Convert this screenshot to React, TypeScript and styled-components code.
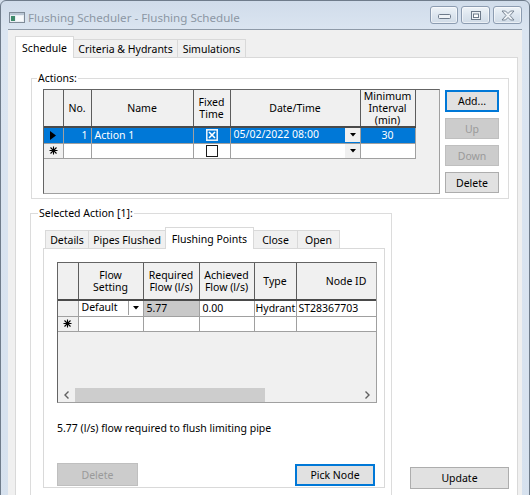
import React from "react";
import styled, { createGlobalStyle } from "styled-components";

const GlobalStyle = createGlobalStyle`
  html, body {
    margin: 0;
    padding: 0;
    overflow: hidden;
    background: #d3deeb;
  }
  body {
    font-family: "Noto Sans", "Liberation Sans", sans-serif;
    font-size: 10.5px;
    color: #000;
  }
  * {
    box-sizing: border-box;
  }
`;

const Window = styled.div`
  width: 530px;
  height: 540px;
  background: linear-gradient(#d0dcea, #dbe5f1 30px, #d6e1ee);
  border: 1px solid #6f7c8b;
  border-radius: 6px 6px 0 0;
  display: flex;
  flex-direction: column;
`;

const TitleBar = styled.div`
  height: 28px;
  display: flex;
  align-items: center;
  padding: 4px 7px 0 8px;
`;

const Caption = styled.div`
  flex: 1;
  margin-left: 3px;
  font-size: 11.6px;
  color: #8c97a4;
  white-space: nowrap;
`;

const WinButtons = styled.div`
  display: flex;
  gap: 3px;
  margin-top: -4px;
`;

const WinButton = styled.div<{ $w: number }>`
  width: ${(p) => p.$w}px;
  height: 18px;
  border: 1px solid #8c9cb1;
  border-radius: 3px;
  background: linear-gradient(#eef3f8, #dde6ef 50%, #d0dbe7);
  box-shadow: inset 0 0 0 1px rgba(255, 255, 255, 0.55);
  display: flex;
  align-items: center;
  justify-content: center;
`;

const Client = styled.div`
  flex: 1;
  margin: 0 7px;
  background: #f0f0f0;
  border-top: 1px solid #8e9aa8;
  padding: 6px 4px 0 7px;
  display: flex;
  flex-direction: column;
`;

const TabStrip = styled.div<{ $pad?: number }>`
  display: flex;
  align-items: flex-end;
  height: 21px;
  padding-left: ${(p) => p.$pad || 0}px;
  position: relative;
  z-index: 1;
`;

const Tab = styled.div<{ $active?: boolean; $w: number }>`
  width: ${(p) => p.$w}px;
  height: ${(p) => (p.$active ? 22 : 18)}px;
  margin-bottom: ${(p) => (p.$active ? -1 : 0)}px;
  margin-right: -1px;
  border: 1px solid #d9d9d9;
  border-bottom: none;
  background: ${(p) => (p.$active ? "#fff" : "#f0f0f0")};
  position: relative;
  z-index: ${(p) => (p.$active ? 2 : 0)};
  display: flex;
  align-items: center;
  justify-content: center;
  padding-top: ${(p) => (p.$active ? 0 : 1)}px;
  white-space: nowrap;
`;

const Panel = styled.div`
  height: 460px;
  background: #fff;
  border: 1px solid #d9d9d9;
  padding: 13px 8px 0 14px;
  display: flex;
  flex-direction: column;
`;

const Group = styled.fieldset<{ $pad: string }>`
  margin: 0;
  min-width: 0;
  border: 1px solid #dcdcdc;
  padding: ${(p) => p.$pad};
`;

const Legend = styled.legend<{ $shift: number }>`
  padding: 0 1px;
  margin-left: ${(p) => p.$shift}px;
  line-height: 15px;
`;

const ActionsGroup = styled(Group)`
  margin-left: 1px;
`;

const GroupRow = styled.div`
  display: flex;
  gap: 5px;
`;

const GridFrame = styled.div<{ $w: number; $h: number }>`
  width: ${(p) => p.$w}px;
  height: ${(p) => p.$h}px;
  background: #f0f0f0;
  border: 1px solid #a0a0a0;
  border-top-color: #646464;
  border-left-color: #646464;
  overflow: hidden;
  display: flex;
  flex-direction: column;
`;

const Table = styled.table<{ $w: number }>`
  width: ${(p) => p.$w}px;
  border-collapse: collapse;
  table-layout: fixed;
  flex: none;
`;

const HeadCell = styled.th<{ $h: number; $shift?: number }>`
  height: ${(p) => p.$h}px;
  padding: 0 2px 0 ${(p) => 2 + (p.$shift || 0)}px;
  background: #f0f0f0;
  font-weight: normal;
  text-align: center;
  vertical-align: middle;
  line-height: 12px;
  border-right: 1px solid #5c5c5c;
  border-bottom: 2px solid #4a4a4a;
  white-space: nowrap;
`;

const Row = styled.tr<{ $selected?: boolean; $h: number }>`
  height: ${(p) => p.$h}px;
  background: ${(p) => (p.$selected ? "#0078d7" : "#fff")};
  color: ${(p) => (p.$selected ? "#fff" : "#000")};
`;

const Cell = styled.td<{ $align?: string; $bg?: string }>`
  padding: 0 3px;
  text-align: ${(p) => p.$align || "left"};
  background: ${(p) => p.$bg || "transparent"};
  border-right: 1px solid #a0a0a0;
  border-bottom: 1px solid #a0a0a0;
  white-space: nowrap;
  overflow: hidden;
  line-height: 13px;
`;

const RowHead = styled.td<{ $selected?: boolean }>`
  padding: 0;
  background: ${(p) => (p.$selected ? "#0078d7" : "#f0f0f0")};
  border-right: 1px solid #a0a0a0;
  border-bottom: 1px solid #a0a0a0;
  text-align: center;
  line-height: 0;
`;

const ComboCell = styled.div`
  display: flex;
  align-items: stretch;
  justify-content: space-between;
  height: 14px;
  margin-right: -3px;
`;

const DropButton = styled.span<{ $edge?: boolean }>`
  width: 15px;
  background: ${(p) => (p.$edge ? "#fff" : "#f0f0f0")};
  border-left: 1px solid ${(p) => (p.$edge ? "#a0a0a0" : "#f0f0f0")};
  display: flex;
  align-items: center;
  justify-content: center;
`;

const ButtonColumn = styled.div`
  display: flex;
  flex-direction: column;
  gap: 6px;
  margin-top: 1px;
`;

const Button = styled.button<{ $w: number; $h: number; $default?: boolean }>`
  width: ${(p) => p.$w}px;
  height: ${(p) => p.$h}px;
  padding: 0;
  font: inherit;
  color: #000;
  background: #e1e1e1;
  border: 1px solid ${(p) => (p.$default ? "#0078d7" : "#adadad")};
  box-shadow: ${(p) => (p.$default ? "inset 0 0 0 1px #0078d7" : "none")};
  &:disabled {
    background: #cccccc;
    border-color: #bfbfbf;
    color: #9a9a9a;
  }
`;

const LowerRow = styled.div`
  display: flex;
  align-items: flex-end;
  margin-top: 7px;
`;

const SelectedGroup = styled(Group)`
  width: 362px;
  flex: none;
`;

const UpdateButton = styled(Button)`
  margin: 0 0 10px 18px;
`;

const InnerPanel = styled.div`
  height: 240px;
  background: #fff;
  border: 1px solid #d9d9d9;
  padding: 13px 0 1px 13px;
  display: flex;
  flex-direction: column;
`;

const Filler = styled.div`
  flex: 1;
`;

const HScroll = styled.div`
  height: 15px;
  display: flex;
  background: #f0f0f0;
`;

const ScrollArrow = styled.div`
  width: 17px;
  display: flex;
  align-items: center;
  justify-content: center;
`;

const ScrollTrack = styled.div`
  flex: 1;
  display: flex;
  align-items: center;
`;

const ScrollThumb = styled.div<{ $w: number }>`
  width: ${(p) => p.$w}px;
  height: 14px;
  background: #cdcdcd;
`;

const Message = styled.div`
  margin-top: 18px;
  line-height: 14px;
`;

const ButtonRow = styled.div`
  margin-top: auto;
  width: 318px;
  display: flex;
  justify-content: space-between;
  align-items: center;
`;

const AppIcon = () => (
  <svg width="16" height="11" viewBox="0 0 16 11">
    <rect x="0.5" y="0.5" width="15" height="10" fill="#e9eef3" stroke="#7f8b98" />
    <rect x="1" y="1" width="14" height="2" fill="#b9c6d4" />
    <rect x="2" y="4" width="4" height="5" fill="#3f8a6c" />
    <rect x="7" y="4" width="7" height="5" fill="#f7f9fb" />
  </svg>
);

const Pointer = () => (
  <svg width="6" height="9" viewBox="0 0 6 9">
    <path d="M0 0 L6 4.5 L0 9 Z" fill="#000" />
  </svg>
);

const NewRow = () => (
  <svg width="9" height="9" viewBox="0 0 9 9">
    <path d="M4.5 0.5 V8.5 M0.5 4.5 H8.5 M1.5 1.5 L7.5 7.5 M7.5 1.5 L1.5 7.5" stroke="#000" strokeWidth="1.1" />
  </svg>
);

const DownArrow = () => (
  <svg width="6" height="4" viewBox="0 0 6 4">
    <path d="M0 0 H6 L3 3.5 Z" fill="#000" />
  </svg>
);

const CheckBox = ({ checked }: { checked?: boolean }) =>
  checked ? (
    <svg width="12" height="12" viewBox="0 0 12 12">
      <rect x="0.5" y="0.5" width="11" height="11" fill="#fff" stroke="#e8f1fb" />
      <rect x="1.5" y="1.5" width="9" height="9" fill="#0078d7" />
      <path d="M3 3 L9 9 M9 3 L3 9" stroke="#fff" strokeWidth="1.6" />
    </svg>
  ) : (
    <svg width="12" height="12" viewBox="0 0 12 12">
      <rect x="0.5" y="0.5" width="11" height="11" fill="#fff" stroke="#1a1a1a" />
    </svg>
  );

const Chevron = ({ left }: { left?: boolean }) => (
  <svg width="5" height="8" viewBox="0 0 5 8">
    <path d={left ? "M4.5 0.5 L1 4 L4.5 7.5" : "M0.5 0.5 L4 4 L0.5 7.5"} stroke="#606060" strokeWidth="1.4" fill="none" />
  </svg>
);

const actionCols = [19, 28, 102, 37, 130, 55];
const pointCols = [20, 65, 56, 55, 42, 80];

export default function App() {
  return (
    <>
      <GlobalStyle />
      <Window>
        <TitleBar>
          <AppIcon />
          <Caption>Flushing Scheduler - Flushing Schedule</Caption>
          <WinButtons>
            <WinButton $w={28}>
              <svg width="13" height="7" viewBox="0 0 13 7">
                <rect x="0.5" y="2.5" width="12" height="4" rx="1" fill="#eef2f6" stroke="#6d7a8a" />
              </svg>
            </WinButton>
            <WinButton $w={29}>
              <svg width="10" height="9" viewBox="0 0 10 9">
                <rect x="0.5" y="0.5" width="9" height="8" fill="#eef2f6" stroke="#6d7a8a" />
                <rect x="2.5" y="3" width="5" height="3.5" fill="#fff" stroke="#6d7a8a" />
              </svg>
            </WinButton>
            <WinButton $w={29}>
              <svg width="14" height="11" viewBox="0 0 14 11">
                <path
                  d="M1 1 H4.5 L7 3.5 L9.5 1 H13 L9 5.5 L13 10 H9.5 L7 7.5 L4.5 10 H1 L5 5.5 Z"
                  fill="#eef2f6"
                  stroke="#6d7a8a"
                  strokeWidth="0.9"
                />
              </svg>
            </WinButton>
          </WinButtons>
        </TitleBar>
        <Client>
          <TabStrip>
            <Tab $active $w={59}>Schedule</Tab>
            <Tab $w={105}>Criteria &amp; Hydrants</Tab>
            <Tab $w={69}>Simulations</Tab>
          </TabStrip>
          <Panel>
            <ActionsGroup $pad="3px 8px 4px 11px">
              <Legend $shift={-6}>Actions:</Legend>
              <GroupRow>
                <GridFrame $w={397} $h={105}>
                  <Table $w={371}>
                    <colgroup>
                      {actionCols.map((w, i) => (
                        <col key={i} style={{ width: w }} />
                      ))}
                    </colgroup>
                    <thead>
                      <tr>
                        <HeadCell $h={37} />
                        <HeadCell $h={37}>No.</HeadCell>
                        <HeadCell $h={37}>Name</HeadCell>
                        <HeadCell $h={37}>
                          Fixed
                          <br />
                          Time
                        </HeadCell>
                        <HeadCell $h={37}>Date/Time</HeadCell>
                        <HeadCell $h={37}>
                          Minimum
                          <br />
                          Interval
                          <br />
                          (min)
                        </HeadCell>
                      </tr>
                    </thead>
                    <tbody>
                      <Row $selected $h={16}>
                        <RowHead $selected>
                          <Pointer />
                        </RowHead>
                        <Cell $align="right">1</Cell>
                        <Cell>Action 1</Cell>
                        <Cell $align="center" style={{ lineHeight: 0 }}>
                          <CheckBox checked />
                        </Cell>
                        <Cell>
                          <ComboCell>
                            <span>05/02/2022 08:00</span>
                            <DropButton>
                              <DownArrow />
                            </DropButton>
                          </ComboCell>
                        </Cell>
                        <Cell $align="center">30</Cell>
                      </Row>
                      <Row $h={15}>
                        <RowHead>
                          <NewRow />
                        </RowHead>
                        <Cell />
                        <Cell />
                        <Cell $align="center" style={{ lineHeight: 0 }}>
                          <CheckBox />
                        </Cell>
                        <Cell>
                          <ComboCell>
                            <span />
                            <DropButton>
                              <DownArrow />
                            </DropButton>
                          </ComboCell>
                        </Cell>
                        <Cell />
                      </Row>
                    </tbody>
                  </Table>
                </GridFrame>
                <ButtonColumn>
                  <Button $w={54} $h={22} $default>
                    Add...
                  </Button>
                  <Button $w={54} $h={21} disabled>
                    Up
                  </Button>
                  <Button $w={54} $h={21} disabled>
                    Down
                  </Button>
                  <Button $w={54} $h={21}>
                    Delete
                  </Button>
                </ButtonColumn>
              </GroupRow>
            </ActionsGroup>
            <LowerRow>
              <SelectedGroup $pad="6px 6px 10px 12px">
                <Legend $shift={-5}>Selected Action [1]:</Legend>
                <TabStrip $pad={2}>
                  <Tab $w={44}>Details</Tab>
                  <Tab $w={78}>Pipes Flushed</Tab>
                  <Tab $active $w={89}>Flushing Points</Tab>
                  <Tab $w={45}>Close</Tab>
                  <Tab $w={43}>Open</Tab>
                </TabStrip>
                <InnerPanel>
                  <GridFrame $w={320} $h={141}>
                    <Table $w={318}>
                      <colgroup>
                        {pointCols.map((w, i) => (
                          <col key={i} style={{ width: w }} />
                        ))}
                      </colgroup>
                      <thead>
                        <tr>
                          <HeadCell $h={37} />
                          <HeadCell $h={37}>
                            Flow
                            <br />
                            Setting
                          </HeadCell>
                          <HeadCell $h={37}>
                            Required
                            <br />
                            Flow (l/s)
                          </HeadCell>
                          <HeadCell $h={37}>
                            Achieved
                            <br />
                            Flow (l/s)
                          </HeadCell>
                          <HeadCell $h={37}>Type</HeadCell>
                          <HeadCell $h={37} $shift={20}>
                            Node ID
                          </HeadCell>
                        </tr>
                      </thead>
                      <tbody>
                        <Row $h={16}>
                          <RowHead />
                          <Cell>
                            <ComboCell>
                              <span>Default</span>
                              <DropButton $edge>
                                <DownArrow />
                              </DropButton>
                            </ComboCell>
                          </Cell>
                          <Cell $bg="#c8c8c8">5.77</Cell>
                          <Cell>0.00</Cell>
                          <Cell style={{ padding: "0 1px" }}>Hydrant</Cell>
                          <Cell style={{ padding: "0 2px" }}>ST28367703</Cell>
                        </Row>
                        <Row $h={15}>
                          <RowHead>
                            <NewRow />
                          </RowHead>
                          <Cell />
                          <Cell />
                          <Cell />
                          <Cell />
                          <Cell />
                        </Row>
                      </tbody>
                    </Table>
                    <Filler />
                    <HScroll>
                      <ScrollArrow>
                        <Chevron left />
                      </ScrollArrow>
                      <ScrollTrack>
                        <ScrollThumb $w={190} />
                      </ScrollTrack>
                      <ScrollArrow>
                        <Chevron />
                      </ScrollArrow>
                    </HScroll>
                  </GridFrame>
                  <Message>5.77 (l/s) flow required to flush limiting pipe</Message>
                  <ButtonRow>
                    <Button $w={81} $h={23} disabled>
                      Delete
                    </Button>
                    <Button $w={80} $h={22} $default>
                      Pick Node
                    </Button>
                  </ButtonRow>
                </InnerPanel>
              </SelectedGroup>
              <UpdateButton $w={99} $h={22}>
                Update
              </UpdateButton>
            </LowerRow>
          </Panel>
        </Client>
      </Window>
    </>
  );
}
